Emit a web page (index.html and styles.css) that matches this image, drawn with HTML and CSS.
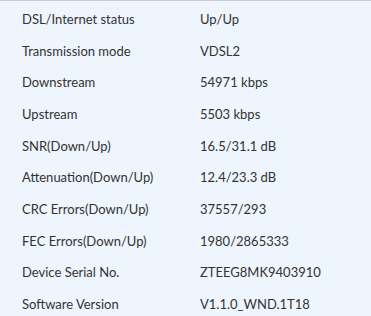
FILE: index.html
```html
<!DOCTYPE html>
<html lang="en">
<head>
  <meta charset="UTF-8">
  <title>DSL status</title>
  <link rel="stylesheet" href="styles.css">
</head>
<body>
  <div class="panel">
    <div class="row"><span class="label">DSL/Internet status</span><span class="value">Up/Up</span></div>
    <div class="row"><span class="label">Transmission mode</span><span class="value">VDSL2</span></div>
    <div class="row"><span class="label">Downstream</span><span class="value">54971 kbps</span></div>
    <div class="row"><span class="label">Upstream</span><span class="value">5503 kbps</span></div>
    <div class="row"><span class="label">SNR(Down/Up)</span><span class="value">16.5/31.1 dB</span></div>
    <div class="row"><span class="label">Attenuation(Down/Up)</span><span class="value">12.4/23.3 dB</span></div>
    <div class="row"><span class="label">CRC Errors(Down/Up)</span><span class="value">37557/293</span></div>
    <div class="row"><span class="label">FEC Errors(Down/Up)</span><span class="value">1980/2865333</span></div>
    <div class="row"><span class="label">Device Serial No.</span><span class="value">ZTEEG8MK9403910</span></div>
    <div class="row"><span class="label">Software Version</span><span class="value">V1.1.0_WND.1T18</span></div>
  </div>
</body>
</html>
```
FILE: styles.css
```css
:root {
  --bg: #eef5fd;
  --text: #333333;
  --edge: #c9ccd0;
}
* { box-sizing: border-box; }
html, body {
  margin: 0;
  padding: 0;
  background: var(--bg);
}
body {
  height: 316px;
  overflow: hidden;
  font-family: Lato, "Liberation Sans", sans-serif;
  font-size: 13px;
  color: var(--text);
}
.panel {
  border-top: 1px solid var(--edge);
  padding-top: 2px;
}
.row {
  display: flex;
  align-items: center;
  height: 31.7px;
}
.label {
  width: 200px;
  padding-left: 22px;
}
.value {
  flex: 1;
}
```
